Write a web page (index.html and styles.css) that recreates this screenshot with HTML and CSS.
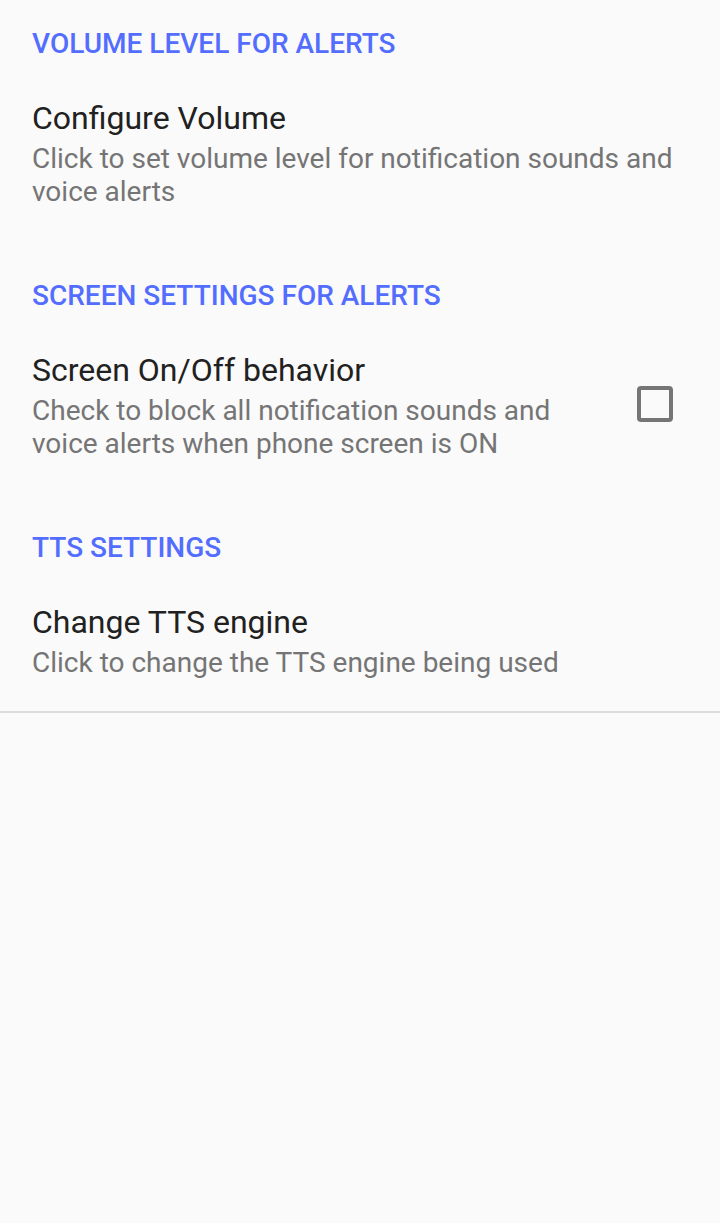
FILE: index.html
```html
<!DOCTYPE html>
<html>
<head>
<meta charset="utf-8">
<link rel="stylesheet" href="styles.css">
</head>
<body>
<div class="prefs">
  <div class="category first">VOLUME LEVEL FOR ALERTS</div>
  <div class="item">
    <div class="text">
      <div class="title">Configure Volume</div>
      <div class="summary">Click to set volume level for notification sounds and voice alerts</div>
    </div>
  </div>
  <div class="category">SCREEN SETTINGS FOR ALERTS</div>
  <div class="item">
    <div class="text">
      <div class="title">Screen On/Off behavior</div>
      <div class="summary">Check to block all notification sounds and voice alerts when phone screen is ON</div>
    </div>
    <div class="checkbox"></div>
  </div>
  <div class="category">TTS SETTINGS</div>
  <div class="item">
    <div class="text">
      <div class="title">Change TTS engine</div>
      <div class="summary">Click to change the TTS engine being used</div>
    </div>
  </div>
</div>
<div class="divider"></div>
</body>
</html>
```
FILE: styles.css
```css
html, body {
  margin: 0;
  padding: 0;
  background: #fafafa;
  font-family: Roboto, "Noto Sans", sans-serif;
}
.prefs {
  display: flex;
  flex-direction: column;
}
.category {
  padding: 40px 32px 0 32px;
  font-size: 28px;
  line-height: 32px;
  font-weight: 500;
  color: #536dfe;
}
.category.first {
  padding-top: 28px;
}
.item {
  display: flex;
  align-items: center;
  padding: 40px 32px 32px 32px;
  gap: 24px;
}
.text {
  flex: 1;
  display: flex;
  flex-direction: column;
  gap: 6px;
}
.title {
  font-size: 32px;
  line-height: 36px;
  color: #212121;
}
.summary {
  font-size: 28px;
  line-height: 33px;
  color: #757575;
}
.checkbox {
  width: 28px;
  height: 28px;
  border: 4px solid #757575;
  border-radius: 4px;
  margin: 0 15px 5px 0;
  flex: none;
}
.divider {
  height: 2px;
  background: #dcdcdc;
}
```
